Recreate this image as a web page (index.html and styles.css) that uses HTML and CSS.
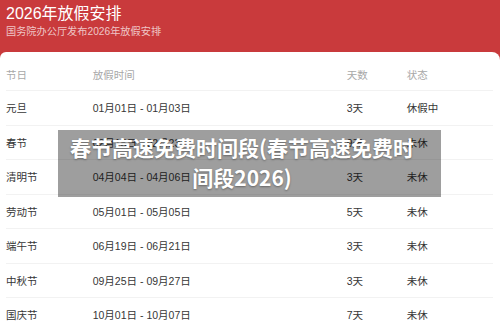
FILE: index.html
```html
<!DOCTYPE html>
<html lang="zh-CN">
<head>
<meta charset="utf-8">
<title>2026年放假安排</title>
<link rel="stylesheet" href="styles.css">
</head>
<body>
<div class="page">
  <header class="hero">
    <h1 class="title">2026年放假安排</h1>
    <p class="subtitle">国务院办公厅发布2026年放假安排</p>
  </header>
  <section class="card">
    <div class="row head">
      <span>节日</span><span>放假时间</span><span>天数</span><span>状态</span>
    </div>
    <div class="row"><span>元旦</span><span>01月01日 - 01月03日</span><span>3天</span><span>休假中</span></div>
    <div class="row"><span>春节</span><span>02月15日 - 02月23日</span><span>9天</span><span>未休</span></div>
    <div class="row"><span>清明节</span><span>04月04日 - 04月06日</span><span>3天</span><span>未休</span></div>
    <div class="row"><span>劳动节</span><span>05月01日 - 05月05日</span><span>5天</span><span>未休</span></div>
    <div class="row"><span>端午节</span><span>06月19日 - 06月21日</span><span>3天</span><span>未休</span></div>
    <div class="row"><span>中秋节</span><span>09月25日 - 09月27日</span><span>3天</span><span>未休</span></div>
    <div class="row"><span>国庆节</span><span>10月01日 - 10月07日</span><span>7天</span><span>未休</span></div>
  </section>
  <div class="banner">春节高速免费时间段(春节高速免费时间段2026)</div>
</div>
</body>
</html>
```
FILE: styles.css
```css
html, body {
  margin: 0;
  padding: 0;
  background: #ffffff;
  overflow: hidden;
}
body {
  font-family: "Liberation Sans", "Noto Sans CJK SC", sans-serif;
}
.page {
  position: relative;
  width: 500px;
  height: 327px;
  overflow: hidden;
  background: #c93a3c;
}
.hero {
  height: 52px;
  padding: 5px 6px 0;
  box-sizing: border-box;
  color: #fff;
}
.title {
  margin: 0;
  font-size: 16px;
  font-weight: normal;
  line-height: 18px;
}
.subtitle {
  margin: 1px 0 0;
  font-size: 10.2px;
  line-height: 16px;
  color: rgba(255, 255, 255, 0.72);
}
.card {
  background: #fff;
  border-radius: 6px 8px 0 0;
  padding: 6px 7px 0 6px;
  height: 275px;
  box-sizing: border-box;
}
.row {
  display: grid;
  grid-template-columns: 86.7px 254px 60px 1fr;
  align-items: center;
  height: 34.5px;
  border-bottom: 1px solid #f2f2f2;
  box-sizing: border-box;
  font-size: 10.5px;
  color: #363636;
}
.row.head {
  height: 33px;
  color: #a8a8a8;
}
.banner {
  position: absolute;
  left: 58px;
  top: 130px;
  width: 383px;
  height: 67px;
  box-sizing: border-box;
  padding: 2px 22px 0 7px;
  background: rgba(0, 0, 0, 0.38);
  color: #fff;
  font-family: "Noto Sans CJK SC", sans-serif;
  font-weight: bold;
  font-size: 21px;
  line-height: 30px;
  text-align: center;
  text-shadow: 0 1px 2px rgba(0, 0, 0, 0.35);
}
```
